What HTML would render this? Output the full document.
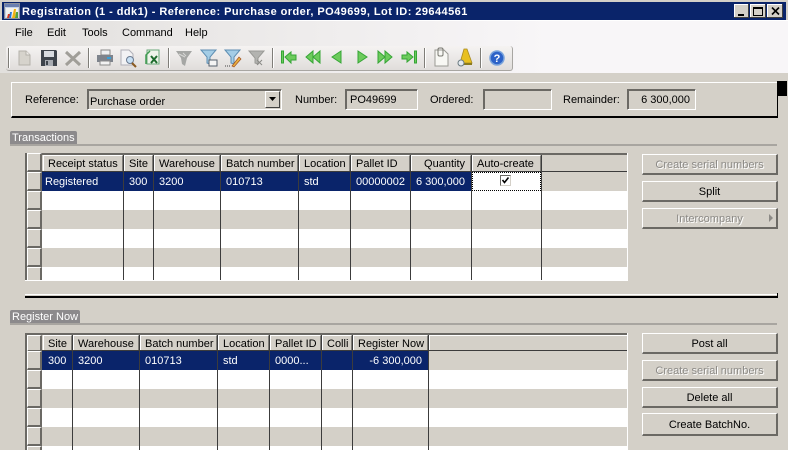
<!DOCTYPE html>
<html><head><meta charset="utf-8">
<style>
html,body{margin:0;padding:0}
body{width:788px;height:450px;overflow:hidden;position:relative;background:#d4d0c8;font:11px/14px "Liberation Sans",sans-serif;color:#000}
div,span.t{position:absolute;white-space:nowrap}
.title{left:2px;top:2px;width:784px;height:18px;background:#0a246a}
.tt{left:22px;top:5px;color:#fff;font-weight:bold;letter-spacing:.44px;font-size:11px}
.wb{top:4px;width:16px;height:14px;background:#d4d0c8;box-sizing:border-box;box-shadow:inset -1px -1px #404040,inset 1px 1px #fff}
.menu{left:0;top:20px;width:788px;height:53px;border-top:1px solid #fff;box-sizing:border-box;background:linear-gradient(90deg,#e2e0dd,#f8f6f8 70%)}
.tb{left:6px;top:46px;width:506px;height:24px;background:linear-gradient(#f5f3f2,#e0dddb);border-radius:3px;border-right:1px solid #a8a6a2;border-bottom:1px solid #a8a6a2}
.m{top:26px}
.sep{top:48px;width:1px;height:20px;background:#7f7d78;box-shadow:1px 0 #fff}
.sk{background:#d4d0c8;box-sizing:border-box;border:1px solid;border-color:#6b6964 #fff #fff #6b6964;box-shadow:inset 1px 1px #6b6964}
.tab{background:#8c8a8c;color:#fff;border-radius:2px 2px 0 0;padding-left:2px;box-sizing:border-box;height:14px}
.ln{height:2px;background:#a8a5a0}
.g{background:#d4d0c8}
.w{background:#fff}
.nv{background:#0a246a}
.r{left:42px;height:19px}
.v{width:1px;background:#3c3c3c}
.h{top:0;background:#d4d0c8;box-sizing:border-box;border-top:1px solid #fff;border-left:1px solid #fff;border-right:1px solid #7f7d78;border-bottom:1px solid #7f7d78;padding-left:4px;padding-top:1px}
.s{left:27px;width:15px;height:19px;background:#d4d0c8;box-sizing:border-box;border-top:1px solid #fff;border-left:1px solid #fff;border-right:2px solid #6b6964;border-bottom:2px solid #6b6964}
.btn{left:642px;width:136px;height:21px;line-height:20px;text-align:center;background:#d4d0c8;box-sizing:border-box;border-top:1px solid #fff;border-left:1px solid #fff;border-right:2px solid #6b6964;border-bottom:2px solid #6b6964}
.dis{color:#8c8a86;text-shadow:1px 1px #fff}
.wt{color:#fff}
</style></head><body>
<div class="title"></div>
<svg style="position:absolute;left:4px;top:3px" width="16" height="16" viewBox="0 0 16 16"><rect x=".5" y=".5" width="15" height="15" fill="#c8d4e8" stroke="#8a8f9c"/><rect x="1" y="1" width="14" height="3" fill="#6a7fb0"/><rect x="2" y="5" width="12" height="9" fill="#f2f2ee"/><path d="M5 15L6 9h2l-1 6z" fill="#2c7ad6"/><path d="M8 15l2-9h2l-1 9z" fill="#f0b010"/><path d="M3 15l1-4h2l-1 4z" fill="#d83820"/><path d="M11 15l1-6h2v6z" fill="#50a040"/></svg>
<div class="tt">Registration (1 - ddk1) - Reference: Purchase order, PO49699, Lot ID: 29644561</div>
<div class="wb" style="left:734px;width:15px"><div style="left:4px;top:10px;width:6px;height:2px;background:#000"></div></div>
<div class="wb" style="left:750px;width:16px"><div style="left:3px;top:3px;width:8px;height:6px;border:1px solid #000;border-top-width:2px"></div></div>
<div class="wb" style="left:767px;width:16px"><svg style="position:absolute;left:4px;top:3px" width="10" height="9"><path d="M1 .5l7 7M8 .5l-7 7" stroke="#000" stroke-width="1.6"/></svg></div>

<div class="menu"></div>
<div class="m" style="left:15px">File</div>
<div class="m" style="left:47px">Edit</div>
<div class="m" style="left:82px">Tools</div>
<div class="m" style="left:122px">Command</div>
<div class="m" style="left:185px">Help</div>

<div class="tb"></div>
<div class="sep" style="left:8px"></div>
<div class="sep" style="left:88px"></div>
<div class="sep" style="left:168px"></div>
<div class="sep" style="left:272px"></div>
<div class="sep" style="left:424px"></div>
<div class="sep" style="left:480px"></div>

<svg style="position:absolute;left:0;top:44px" width="520" height="28" viewBox="0 44 520 28">
<!-- new doc -->
<path d="M19 51h7l4 4v10H19z" fill="#d6d3cc" stroke="#b4b1aa"/><path d="M26 51v4h4" fill="#eeece8" stroke="#b4b1aa"/>
<!-- save -->
<path d="M41 50h15l1 1v15H41z" fill="#3e444c"/><rect x="44" y="51" width="10" height="6" fill="#d8dbe0"/><rect x="45" y="60" width="8" height="6" fill="#a8acb2"/><rect x="46" y="61" width="2" height="4" fill="#3e444c"/>
<!-- delete -->
<path d="M66 52l14 13M80 52L66 65" stroke="#a09e98" stroke-width="3"/>
<!-- print -->
<rect x="101" y="50" width="9" height="5" fill="#eef0f2" stroke="#8a8a8a"/><rect x="97" y="55" width="16" height="7" fill="#7d838c"/><rect x="100" y="61" width="10" height="4" fill="#f2f2f2" stroke="#8a8a8a"/><rect x="107" y="57" width="4" height="2" fill="#38a0d8"/>
<!-- preview -->
<path d="M121 50h8l4 4v11h-12z" fill="#f2f2f4" stroke="#b0b0b8"/><circle cx="130" cy="60" r="3.5" fill="#c8e0f4" stroke="#6a7a90"/><path d="M132 63l4 4" stroke="#8a5a20" stroke-width="2"/>
<!-- excel -->
<rect x="147" y="50" width="12" height="14" fill="#eef4ea" stroke="#6aa87a"/><path d="M146 64v-9l4-4" fill="none" stroke="#3f9a50" stroke-width="1.500"/><path d="M151 56l6 7M157 56l-6 7" stroke="#1c6a2c" stroke-width="2"/>
<!-- filters -->
<path d="M176 51h16l-5 7-2 8-3-2-1-6z" fill="#a5a6a4"/><path d="M179 54l6 3M183 53l3 3" stroke="#d8d8d6" stroke-width="1"/>
<path d="M201 50h15l-6 7v7l-3-1v-6z" fill="#a4cde6" stroke="#5d8db2"/><rect x="209" y="60" width="8" height="6" fill="#f4f4f4" stroke="#55606c"/>
<path d="M225 50h15l-6 7v7l-3-1v-6z" fill="#a4cde6" stroke="#5d8db2"/><path d="M232 66l7-9 2 2-7 8z" fill="#e8b040" stroke="#a05020" stroke-width=".7"/><path d="M225 66h5" stroke="#444" stroke-dasharray="1 1"/>
<path d="M249 51h15l-6 7v6l-3-1v-5z" fill="#b3b3b0" stroke="#9a9a96"/><path d="M257 60l5 5M262 60l-5 5" stroke="#8a8a86"/>
<!-- nav -->
<g fill="#6ccb5c" stroke="#35a535" stroke-width="1">
<rect x="281.500" y="51" width="2" height="12"/><path d="M285 57l6-5v3h5v5h-5v3z"/>
<path d="M306 57l7-6v12zM313 57l7-6v12z"/>
<path d="M332 57l9-6v12z"/>
<path d="M358 51l9 6-9 6z"/>
<path d="M378 51l7 6-7 6zM385 51l7 6-7 6z"/>
<path d="M402 55h5v-3l6 5-6 5v-3h-5z"/><rect x="414.500" y="51" width="2" height="12"/>
</g>
<!-- note -->
<path d="M435 50h9l4 4v12h-13z" fill="#f8f8f4" stroke="#9a9a94"/><rect x="438" y="48" width="5" height="8" rx="1.500" fill="none" stroke="#77776f"/>
<!-- bell -->
<path d="M464 49h3l5 14h-12z" fill="#e8c020" stroke="#a88a20" stroke-width=".8"/><rect x="460" y="63" width="12" height="2" fill="#8a7a20"/><circle cx="461" cy="63" r="3" fill="#e4eaf0" stroke="#6a7a80"/>
<!-- help -->
<circle cx="497" cy="58" r="7" fill="#2c62c8" stroke="#7aa4dc" stroke-width="1.500"/><text x="497" y="62" text-anchor="middle" font-family="Liberation Sans" font-size="11" font-weight="bold" fill="#fff">?</text>
</svg>

<!-- top panel -->
<div style="left:11px;top:82px;width:767px;height:36px;box-sizing:border-box;border-top:1px solid #fff;border-left:1px solid #fff;border-right:1px solid #000;border-bottom:2px solid #000"></div>
<div style="left:777px;top:81px;width:10px;height:15px;background:#000"></div>
<div style="left:25px;top:93px">Reference:</div>
<div class="sk" style="left:87px;top:89px;width:195px;height:21px"></div>
<div style="left:90px;top:95px">Purchase order</div>
<div style="left:265px;top:91px;width:15px;height:17px;background:#d4d0c8;box-sizing:border-box;border-top:1px solid #fff;border-left:1px solid #fff;border-right:1px solid #404040;border-bottom:1px solid #404040"><svg style="position:absolute;left:3px;top:5px" width="8" height="5"><path d="M0 0h7L3.500 4z" fill="#000"/></svg></div>
<div style="left:295px;top:93px">Number:</div>
<div class="sk" style="left:345px;top:89px;width:73px;height:21px"></div>
<div style="left:350px;top:93px">PO49699</div>
<div style="left:430px;top:93px">Ordered:</div>
<div class="sk" style="left:483px;top:89px;width:69px;height:21px"></div>
<div style="left:563px;top:93px">Remainder:</div>
<div class="sk" style="left:627px;top:89px;width:69px;height:21px"></div>
<div style="left:640px;top:93px;width:50px;text-align:right">6 300,000</div>

<!-- Transactions -->
<div class="tab" style="left:10px;top:131px;width:67px">Transactions</div>
<div class="ln" style="left:10px;top:144px;width:767px"></div>

<div class="g" style="left:25px;top:153px;width:603px;height:2px;background:#6b6964"></div>
<div style="left:25px;top:153px;width:2px;height:127px;background:#6b6964"></div>
<div style="left:627px;top:153px;width:1px;height:127px;background:#fff"></div>
<div style="left:25px;top:280px;width:603px;height:1px;background:#fff"></div>

<div class="h" style="left:27px;top:155px;width:15px;height:17px"></div>
<div class="h" style="left:43px;top:155px;width:80px;height:17px">Receipt status</div>
<div class="h" style="left:124px;top:155px;width:29px;height:17px">Site</div>
<div class="h" style="left:154px;top:155px;width:66px;height:17px">Warehouse</div>
<div class="h" style="left:221px;top:155px;width:77px;height:17px">Batch number</div>
<div class="h" style="left:299px;top:155px;width:51px;height:17px">Location</div>
<div class="h" style="left:351px;top:155px;width:59px;height:17px">Pallet ID</div>
<div class="h" style="left:411px;top:155px;width:60px;height:17px;text-align:right;padding-right:5px">Quantity</div>
<div class="h" style="left:472px;top:155px;width:69px;height:17px">Auto-create</div>
<div style="left:42px;top:171px;width:585px;height:1px;background:#3c3c3c"></div>

<div class="r nv" style="top:172px;width:430px"></div>
<div class="r w" style="top:172px;left:472px;width:69px;box-sizing:border-box;border:1px dotted #000"></div>
<div class="r w" style="top:191px;width:585px"></div>
<div class="r g" style="top:210px;width:585px"></div>
<div class="r w" style="top:229px;width:585px"></div>
<div class="r g" style="top:248px;width:585px"></div>
<div class="r w" style="top:267px;width:585px;height:13px"></div>

<div class="s" style="top:153px;height:19px"></div>
<div class="s" style="top:172px"></div>
<div class="s" style="top:191px"></div>
<div class="s" style="top:210px"></div>
<div class="s" style="top:229px"></div>
<div class="s" style="top:248px"></div>
<div class="s" style="top:267px;height:13px;border-bottom:0"></div>

<div class="v" style="left:123px;top:155px;height:125px"></div>
<div class="v" style="left:153px;top:155px;height:125px"></div>
<div class="v" style="left:220px;top:155px;height:125px"></div>
<div class="v" style="left:298px;top:155px;height:125px"></div>
<div class="v" style="left:350px;top:155px;height:125px"></div>
<div class="v" style="left:410px;top:155px;height:125px"></div>
<div class="v" style="left:471px;top:155px;height:125px"></div>
<div class="v" style="left:541px;top:155px;height:125px"></div>

<div class="wt" style="left:45px;top:175px">Registered</div>
<div class="wt" style="left:129px;top:175px">300</div>
<div class="wt" style="left:159px;top:175px">3200</div>
<div class="wt" style="left:226px;top:175px">010713</div>
<div class="wt" style="left:304px;top:175px">std</div>
<div class="wt" style="left:356px;top:175px">00000002</div>
<div class="wt" style="left:416px;top:175px">6 300,000</div>
<div style="left:500px;top:175px;width:11px;height:11px;background:#fff;box-sizing:border-box;border:1px solid;border-color:#6b6964 #d4d0c8 #d4d0c8 #6b6964"><svg style="position:absolute;left:0;top:0" width="9" height="9"><path d="M1.500 4l2 2.500 4-5" fill="none" stroke="#000" stroke-width="1.600"/></svg></div>

<div class="btn dis" style="top:154px">Create serial numbers</div>
<div class="btn" style="top:181px">Split</div>
<div class="btn dis" style="top:208px">Intercompany</div>
<svg style="position:absolute;left:769px;top:214px" width="5" height="9"><path d="M0 0l4 4-4 4z" fill="#8c8a86"/></svg>

<div style="left:25px;top:294px;width:752px;height:1px;background:#fff"></div>
<div style="left:25px;top:296px;width:753px;height:2px;background:#000"></div>
<div style="left:777px;top:293px;width:1px;height:4px;background:#000"></div>

<!-- Register Now -->
<div class="tab" style="left:10px;top:310px;width:70px;height:15px">Register Now</div>
<div class="ln" style="left:10px;top:323px;width:767px"></div>

<div style="left:25px;top:333px;width:603px;height:2px;background:#6b6964"></div>
<div style="left:25px;top:333px;width:2px;height:117px;background:#6b6964"></div>
<div style="left:627px;top:333px;width:1px;height:117px;background:#fff"></div>

<div class="h" style="left:27px;top:335px;width:15px;height:16px"></div>
<div class="h" style="left:43px;top:335px;width:29px;height:16px">Site</div>
<div class="h" style="left:73px;top:335px;width:66px;height:16px">Warehouse</div>
<div class="h" style="left:140px;top:335px;width:77px;height:16px">Batch number</div>
<div class="h" style="left:218px;top:335px;width:51px;height:16px">Location</div>
<div class="h" style="left:270px;top:335px;width:51px;height:16px">Pallet ID</div>
<div class="h" style="left:322px;top:335px;width:30px;height:16px">Colli</div>
<div class="h" style="left:353px;top:335px;width:75px;height:16px">Register Now</div>
<div class="h" style="left:429px;top:335px;width:198px;height:16px;border-right:0"></div>
<div style="left:42px;top:350px;width:585px;height:1px;background:#3c3c3c"></div>

<div class="r nv" style="top:351px;width:386px"></div>
<div class="r g" style="top:351px;left:429px;width:198px"></div>
<div class="r w" style="top:370px;width:585px"></div>
<div class="r g" style="top:389px;width:585px"></div>
<div class="r w" style="top:408px;width:585px"></div>
<div class="r g" style="top:427px;width:585px"></div>
<div class="r w" style="top:446px;width:585px;height:4px"></div>

<div class="s" style="top:335px;height:17px"></div>
<div class="s" style="top:351px"></div>
<div class="s" style="top:370px"></div>
<div class="s" style="top:389px"></div>
<div class="s" style="top:408px"></div>
<div class="s" style="top:427px"></div>
<div class="s" style="top:446px;height:4px;border-bottom:0"></div>

<div class="v" style="left:72px;top:335px;height:115px"></div>
<div class="v" style="left:139px;top:335px;height:115px"></div>
<div class="v" style="left:217px;top:335px;height:115px"></div>
<div class="v" style="left:269px;top:335px;height:115px"></div>
<div class="v" style="left:321px;top:335px;height:115px"></div>
<div class="v" style="left:352px;top:335px;height:115px"></div>
<div class="v" style="left:428px;top:335px;height:115px"></div>

<div class="wt" style="left:48px;top:354px">300</div>
<div class="wt" style="left:78px;top:354px">3200</div>
<div class="wt" style="left:145px;top:354px">010713</div>
<div class="wt" style="left:223px;top:354px">std</div>
<div class="wt" style="left:275px;top:354px">0000...</div>
<div class="wt" style="left:360px;top:354px;width:62px;text-align:right">-6 300,000</div>

<div class="btn" style="top:333px">Post all</div>
<div class="btn dis" style="top:360px">Create serial numbers</div>
<div class="btn" style="top:387px">Delete all</div>
<div class="btn" style="top:413px;height:23px;line-height:22px">Create BatchNo.</div>
</body></html>
